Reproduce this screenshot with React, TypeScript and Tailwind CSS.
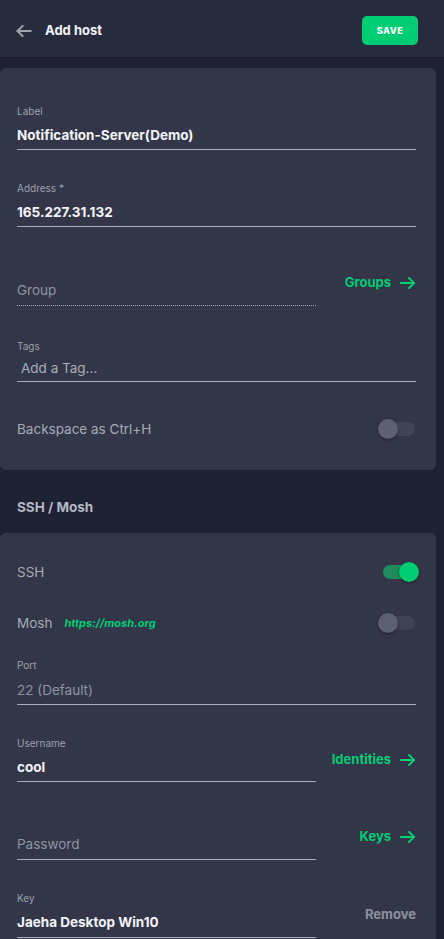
import React from "react";

const font = { fontFamily: "Inter, 'Noto Sans', sans-serif" };

function Arrow({ className, back }: { className?: string; back?: boolean }) {
  return (
    <svg viewBox="0 0 16 12" className={className} fill="none" stroke="currentColor" strokeWidth="2" strokeLinecap="square">
      {back ? <path d="M2 6h13M7 1L2 6l5 5" /> : <path d="M1 6h13M9 1l5 5-5 5" />}
    </svg>
  );
}

function Toggle({ on }: { on?: boolean }) {
  return (
    <div className="relative w-[38px] h-[20px] flex items-center">
      <div className={`ml-[2px] w-[35px] h-[14px] rounded-full ${on ? "bg-[#1f8a5c]" : "bg-[#3f4356]"}`} />
      <div
        className={`absolute top-0 w-[20px] h-[20px] rounded-full shadow-[0_1px_3px_rgba(0,0,0,0.45)] ${
          on ? "right-0 bg-[#00cc74]" : "left-0 bg-[#5d6073]"
        }`}
      />
    </div>
  );
}

type FieldProps = {
  label?: string;
  value: string;
  muted?: boolean;
  dotted?: boolean;
  narrow?: boolean;
  pb?: string;
};

function Field({ label, value, muted, dotted, narrow, pb = "pb-[4px]" }: FieldProps) {
  return (
    <div className={narrow ? "w-[299px]" : "w-full"}>
      <div className="h-[12px] text-[10px] leading-[12px] text-[#9ca1ae]">{label}</div>
      <div
        className={`mt-[8px] leading-[20px] ${pb} border-b ${
          dotted ? "border-dotted border-[#a9aebb]" : "border-[#a9aebb]"
        } ${muted ? "text-[13.5px] text-[#8f94a3]" : "text-[13.5px] font-bold text-[#f4f5f8]"}`}
      >
        {value}
      </div>
    </div>
  );
}

function LinkRow({ children, link, muted }: { children: React.ReactNode; link: string; muted?: boolean }) {
  return (
    <div className="flex items-center justify-between">
      {children}
      {muted ? (
        <span className="text-[13px] font-bold text-[#8c91a0]">{link}</span>
      ) : (
        <span className="flex items-center gap-[9px] text-[13px] font-bold text-[#00cc74]">
          {link}
          <Arrow className="w-[16px] h-[12px]" />
        </span>
      )}
    </div>
  );
}

export default function App() {
  return (
    <div className="w-[444px] h-[939px] overflow-hidden bg-[#1e2033]" style={font}>
      {/* header */}
      <div className="h-[58px] bg-[#282b3e] border-b border-[#1a1c2a] flex items-center justify-between pt-[4px] pl-[15px] pr-[26px]">
        <div className="flex items-center">
          <Arrow back className="w-[17px] h-[12px] text-[#9ca3ab]" />
          <span className="ml-[13px] text-[13px] font-bold text-[#f4f5f8]">Add host</span>
        </div>
        <button className="w-[56px] h-[29px] rounded-[5px] bg-[#00cc74] text-white text-[9px] font-extrabold tracking-[0.6px]">
          SAVE
        </button>
      </div>

      {/* general card */}
      <div className="mt-[10px] mr-[8px] rounded-[6px] bg-[#333649] pl-[17px] pr-[20px] pt-[37px] pb-[31px]">
        <Field label="Label" value="Notification-Server(Demo)" />
        <div className="mt-[32px]">
          <Field label="Address *" value="165.227.31.132" />
        </div>
        <div className="mt-[33px]">
          <LinkRow link="Groups">
            <Field value="Group" muted dotted narrow pb="pb-[5px]" />
          </LinkRow>
        </div>
        <div className="mt-[34px]">
          <div className="text-[10px] leading-[12px] text-[#9ca1ae]">Tags</div>
          <div className="mt-[6px] pl-[4px] pb-[3px] leading-[20px] text-[13.5px] text-[#a9aebb] border-b border-[#a9aebb]">
            Add a Tag...
          </div>
        </div>
        <div className="mt-[37px] flex items-center justify-between">
          <span className="text-[13.5px] leading-[20px] text-[#a7acb8]">Backspace as Ctrl+H</span>
          <Toggle />
        </div>
      </div>

      <div className="mt-[29px] mb-[18px] pl-[17px] text-[13.5px] leading-[16px] font-bold text-[#b4b8c3]">SSH / Mosh</div>

      {/* ssh card */}
      <div className="mr-[8px] rounded-t-[6px] bg-[#333649] pl-[17px] pr-[20px] pt-[29px] pb-[20px]">
        <div className="flex items-center justify-between -mr-[3px]">
          <span className="text-[13.5px] leading-[20px] text-[#a7acb8]">SSH</span>
          <Toggle on />
        </div>
        <div className="mt-[31px] flex items-center justify-between">
          <span className="flex items-center">
            <span className="text-[13.5px] leading-[20px] text-[#a7acb8]">Mosh</span>
            <span className="ml-[12px] text-[11px] italic font-bold text-[#00cc74]">https://mosh.org</span>
          </span>
          <Toggle />
        </div>
        <div className="mt-[26px]">
          <div className="text-[10px] leading-[12px] text-[#9ca1ae]">Port</div>
          <div className="mt-[9px] pb-[4px] leading-[20px] text-[13.5px] text-[#8f94a3] border-b border-[#a9aebb]">22 (Default)</div>
        </div>
        <div className="mt-[32px]">
          <LinkRow link="Identities">
            <Field label="Username" value="cool" narrow />
          </LinkRow>
        </div>
        <div className="mt-[32px]">
          <LinkRow link="Keys">
            <Field value="Password" muted narrow pb="pb-[5px]" />
          </LinkRow>
        </div>
        <div className="mt-[32px]">
          <LinkRow link="Remove" muted>
            <Field label="Key" value="Jaeha Desktop Win10" narrow pb="pb-[5px]" />
          </LinkRow>
        </div>
      </div>
    </div>
  );
}
